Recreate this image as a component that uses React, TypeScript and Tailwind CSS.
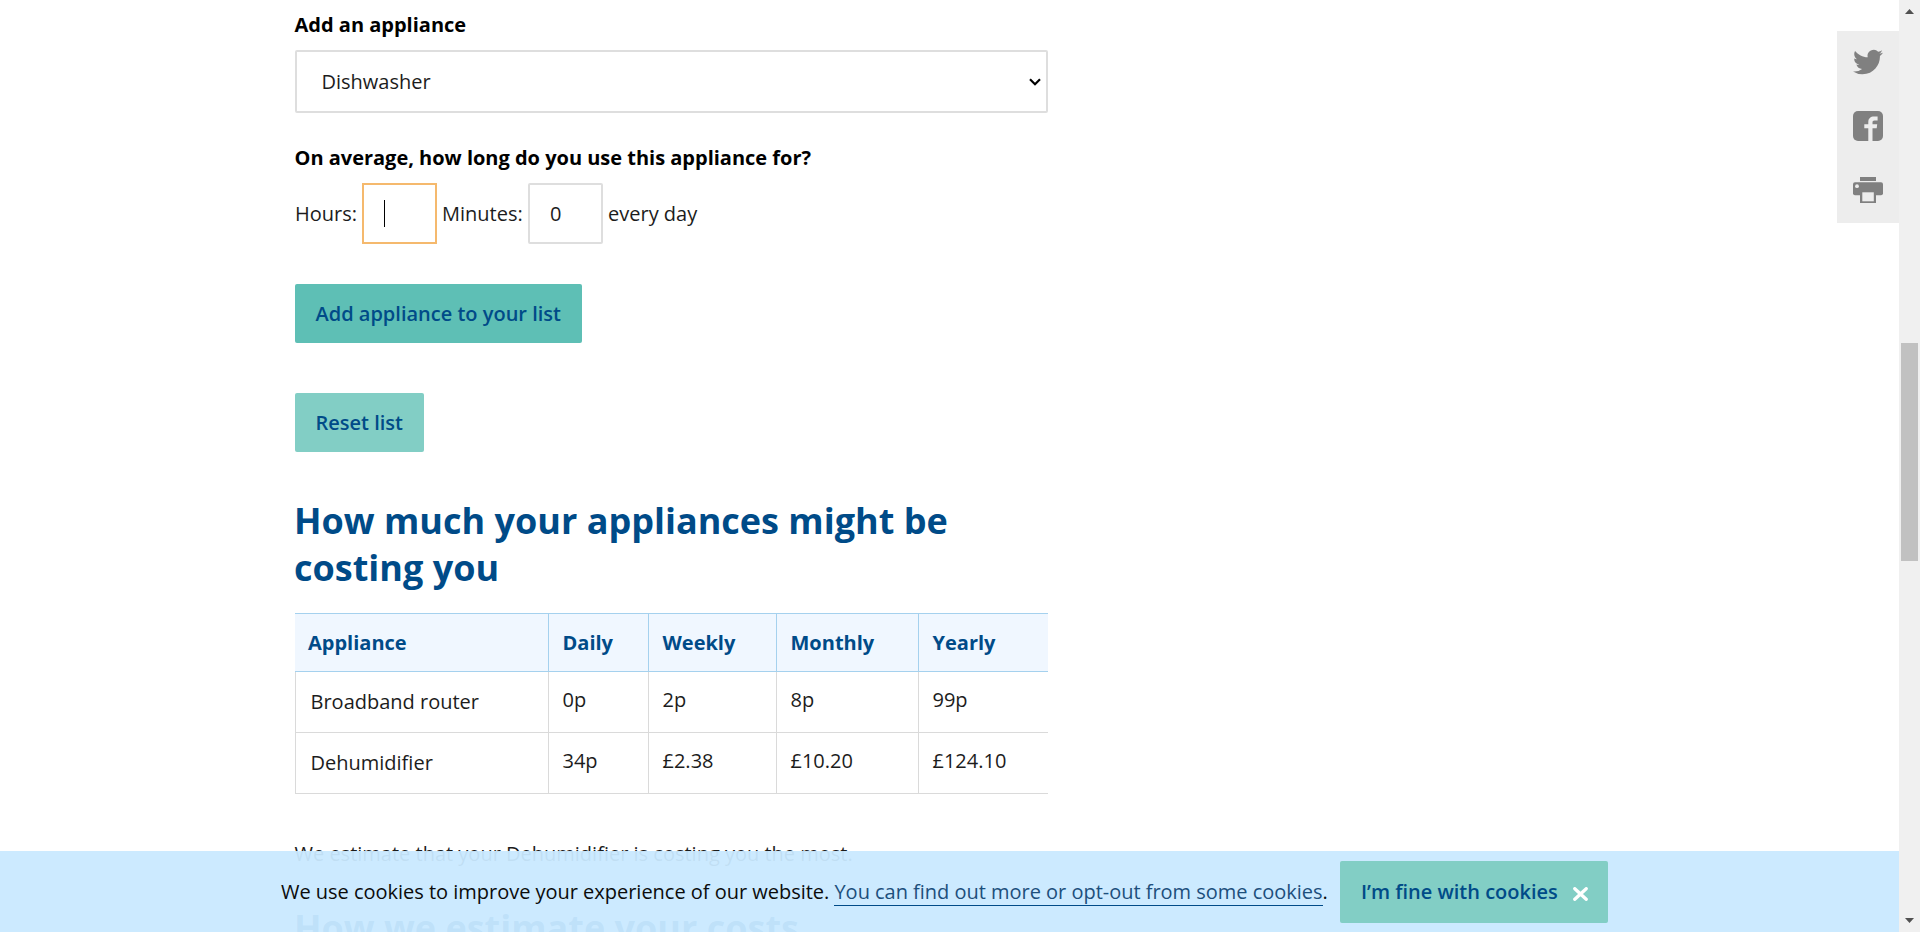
import React from "react";

const columns = ["Daily", "Weekly", "Monthly", "Yearly"];
const rows = [
  { name: "Broadband router", costs: ["0p", "2p", "8p", "99p"] },
  { name: "Dehumidifier", costs: ["34p", "£2.38", "£10.20", "£124.10"] },
];

function ShareBar() {
  return (
    <aside className="absolute right-[21px] top-[31px] flex h-48 w-[62px] flex-col items-center bg-[#ededed] text-[#808080]">
      <a className="flex h-16 items-center pb-[3px]" aria-label="Twitter">
        <svg width="30" height="30" viewBox="0 0 24 24" fill="currentColor">
          <path d="M23.954 4.569a10 10 0 0 1-2.825.775 4.958 4.958 0 0 0 2.163-2.723c-.951.555-2.005.959-3.127 1.184a4.92 4.92 0 0 0-8.384 4.482C7.691 8.094 4.066 6.13 1.64 3.161a4.822 4.822 0 0 0-.666 2.475c0 1.71.87 3.213 2.188 4.096a4.904 4.904 0 0 1-2.228-.616v.061a4.923 4.923 0 0 0 3.946 4.827 4.996 4.996 0 0 1-2.212.085 4.937 4.937 0 0 0 4.604 3.417 9.868 9.868 0 0 1-6.102 2.105c-.39 0-.779-.023-1.17-.067a13.995 13.995 0 0 0 7.557 2.209c9.054 0 13.999-7.496 13.999-13.986 0-.209 0-.42-.015-.63a9.936 9.936 0 0 0 2.46-2.548z" />
        </svg>
      </a>
      <a className="flex h-16 items-center pb-[2px]" aria-label="Facebook">
        <svg width="30" height="30" viewBox="0 0 30 30">
          <rect width="30" height="30" rx="5" fill="currentColor" />
          <path d="M15.3 30V17.2H11.3V13.3H15.3V11C15.3 7.2 17.6 5.4 21 5.4H24.6V9.5H21.6C20 9.5 19.5 10.2 19.5 11.5V13.3H24.2L23.7 17.2H19.5V30Z" fill="#ededed" />
        </svg>
      </a>
      <a className="flex h-16 items-center pb-[2px]" aria-label="Print">
        <svg width="30" height="26" viewBox="0 0 30 26">
          <rect x="7" y="0" width="16" height="4" fill="currentColor" />
          <rect x="0" y="5.3" width="30" height="13" rx="2" fill="currentColor" />
          <rect x="7" y="15" width="16" height="11" fill="currentColor" />
          <rect x="9.3" y="15.3" width="11.5" height="9" fill="#ededed" />
          <circle cx="4" cy="9.2" r="1.9" fill="#ededed" />
        </svg>
      </a>
    </aside>
  );
}

function Scrollbar() {
  return (
    <div className="flex w-[21px] shrink-0 flex-col items-center bg-[#f0f0f0]">
      <svg className="mt-[9px]" width="9" height="5" viewBox="0 0 9 5">
        <path d="M4.5 0L9 5H0Z" fill="#505050" />
      </svg>
      <div className="mt-[329px] h-[218px] w-[17px] bg-[#c1c1c1]" />
      <svg className="mt-[357px]" width="9" height="5" viewBox="0 0 9 5">
        <path d="M0 0H9L4.5 5Z" fill="#505050" />
      </svg>
    </div>
  );
}

function CookieBanner() {
  return (
    <div className="absolute bottom-0 left-0 right-[21px] flex h-[81px] items-start bg-[#c9e9ff]/95 pl-[281px] pt-[10px]">
      <p className="flex h-[62px] w-[1059px] shrink-0 items-center whitespace-nowrap tracking-[-0.02px] text-[#0b0c0c]">
        <span>
          We use cookies to improve your experience of our website.{" "}
          <a className="border-b border-[#004b88] text-[#1d4f7c]">
            You can find out more or opt-out from some cookies
          </a>
          .
        </span>
      </p>
      <button className="flex h-[62px] w-[268px] shrink-0 items-center rounded-[2px] bg-[#82cec5] pl-[21px] text-left font-semibold whitespace-nowrap text-[#004b88]">
        I’m fine with cookies
        <svg className="ml-[15px] mt-[4px]" width="15" height="14" viewBox="0 0 15 14" stroke="#fff" strokeWidth="3.3" strokeLinecap="round">
          <path d="M1.8 1.7L13.2 12.3M13.2 1.7L1.8 12.3" />
        </svg>
      </button>
    </div>
  );
}

export default function App() {
  return (
    <div className="relative flex h-[932px] overflow-hidden bg-white font-['Open_Sans',sans-serif] text-[20px] leading-[30px] text-[#1c1c1c]">
      <main className="flex-1 overflow-hidden pl-[295px]">
        <div className="flex w-[753px] flex-col items-start">
          <label className="-ml-[0.5px] mt-[10px] font-bold text-black">Add an appliance</label>
          <div className="mt-[10px] flex h-[63px] w-full items-center justify-between rounded-[2px] border-2 border-[#dedede] pl-[24.5px] pr-[5px]">
            <span>Dishwasher</span>
            <svg width="12" height="8" viewBox="0 0 12 8" fill="none" stroke="#000" strokeWidth="2.2">
              <path d="M1 1.2L6 6.2L11 1.2" />
            </svg>
          </div>
          <p className="-ml-[0.5px] mt-[30px] font-bold tracking-[-0.01px] text-black">On average, how long do you use this appliance for?</p>
          <div className="mt-[10px] flex h-[61px] items-center whitespace-nowrap">
            <span className="w-[67px]">Hours:</span>
            <div className="flex h-[61px] w-[75px] items-center border-2 border-[#f5b96d] pl-5">
              <span className="h-[27px] w-px bg-black" />
            </div>
            <span className="w-[91px] pl-[5px]">Minutes:</span>
            <div className="flex h-[61px] w-[75px] items-center rounded-[2px] border-2 border-[#dedede] pl-5">0</div>
            <span className="pl-[5px]">every day</span>
          </div>
          <button className="mt-10 h-[59px] w-[287px] rounded-[2px] bg-[#5ebfb5] pl-[20.5px] text-left font-semibold text-[#004b88]">
            Add appliance to your list
          </button>
          <button className="mt-[50px] h-[59px] w-[129px] rounded-[2px] bg-[#82cec5] pl-[20.5px] text-left font-semibold text-[#004b88]">
            Reset list
          </button>
          <h2 className="-ml-px mt-[45px] text-[36px] font-bold leading-[47px] text-[#004b88]">
            How much your appliances might be
            <br />
            costing you
          </h2>
          <table className="mt-[22px] w-full table-fixed border-separate border-spacing-0 text-left">
            <colgroup>
              <col className="w-[253px]" />
              <col className="w-[100px]" />
              <col className="w-[128px]" />
              <col className="w-[142px]" />
              <col className="w-[130px]" />
            </colgroup>
            <thead>
              <tr className="h-[59px] bg-[#f0f7ff] text-[#004b88]">
                <th className="border-y border-[#a5d1ee] p-0 pl-[13px] font-bold">Appliance</th>
                {columns.map((c) => (
                  <th key={c} className="border-y border-l border-[#a5d1ee] p-0 pl-[13.5px] font-bold">{c}</th>
                ))}
              </tr>
            </thead>
            <tbody>
              {rows.map((r) => (
                <tr key={r.name} className="h-[61px]">
                  <td className="border-b border-l border-[#dadada] p-0 pl-[14.5px]">{r.name}</td>
                  {r.costs.map((c) => (
                    <td key={c} className="border-b border-l border-[#dadada] p-0 pb-[5px] pl-[13.5px]">{c}</td>
                  ))}
                </tr>
              ))}
            </tbody>
          </table>
          <p className="-ml-[0.5px] mt-[45px]">We estimate that your Dehumidifier is costing you the most.</p>
          <h2 className="-ml-px mt-[35px] text-[36px] font-bold leading-[47px] text-[#004b88] whitespace-nowrap">How we estimate your costs</h2>
        </div>
      </main>
      <Scrollbar />
      <ShareBar />
      <CookieBanner />
    </div>
  );
}
